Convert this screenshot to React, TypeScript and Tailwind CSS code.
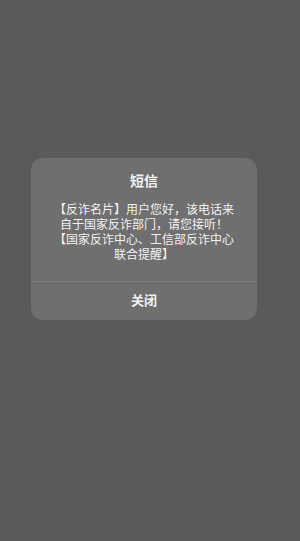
export default function App() {
    const lines = [
        '【反诈名片】用户您好，该电话来',
        '自于国家反诈部门，请您接听！',
        '【国家反诈中心、工信部反诈中心',
        '联合提醒】',
    ];

    return (
        <div
            className="w-[300px] h-[541px] bg-[#5a5a5a] flex justify-center pt-[158px]"
            style={{ fontFamily: '"Liberation Sans", "Noto Sans CJK SC", sans-serif' }}
        >
            {/* Alert dialog */}
            <div className="w-[226px] h-[162px] ml-[-12px] rounded-[12px] bg-[#6f6f6f] flex flex-col text-[#f2f2f2]">
                <div className="pt-[13px] pb-[18px] px-3 text-center">
                    <div className="text-[14px] leading-[20px] font-bold">短信</div>
                    <div className="mt-[12px] text-[12px] leading-[15px]">
                        {lines.map((line) => (
                            <div key={line} className="whitespace-nowrap">{line}</div>
                        ))}
                    </div>
                </div>
                <div className="h-px bg-[#7d7d7d]" />
                <button className="flex-1 text-[13px] font-bold text-center">关闭</button>
            </div>
        </div>
    );
}
